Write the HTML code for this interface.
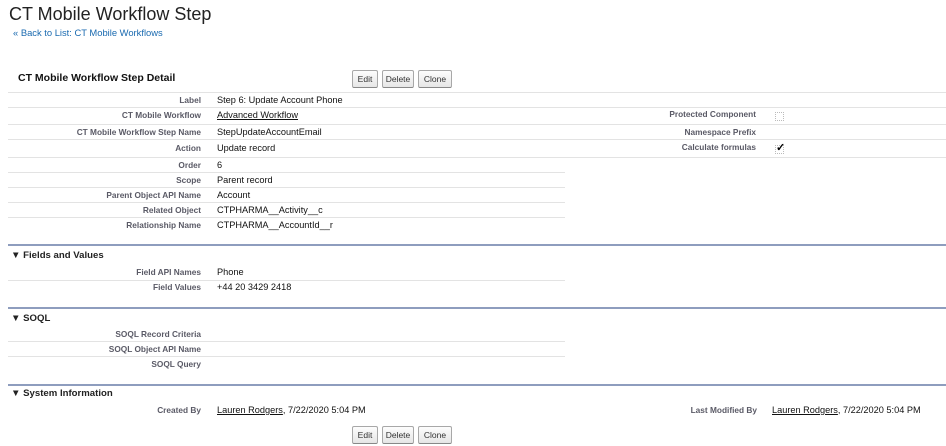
<!DOCTYPE html>
<html><head><meta charset="utf-8"><style>
*{margin:0;padding:0;box-sizing:border-box}
body{width:946px;height:446px;background:#fff;position:relative;overflow:hidden;font-family:"Liberation Sans",Arial,sans-serif;color:#000}
.a{position:absolute;white-space:nowrap}
.t{left:9px;top:4px;font-size:18px;color:#222}
.bk{left:13px;top:27px;font-size:9.4px;color:#1a6ab0}
.dh{left:18px;top:72px;font-size:10.5px;font-weight:bold;color:#111}
.btn{position:absolute;height:18px;border:1px solid #a8a8a8;border-bottom-color:#888;border-radius:2px;background:linear-gradient(#fdfdfd,#e6e6e6);font-size:8.5px;color:#333;text-align:center;line-height:16px}
.l{font-size:8.3px;font-weight:bold;color:#5a5a66;text-align:right}
.v{font-size:9.2px;color:#111}
.ln{position:absolute;height:1px;background:#e3e3e3}
.bl{position:absolute;left:8px;width:938px;height:2px;background:#8e9dbe}
.sh{font-size:9.6px;font-weight:bold;color:#222;left:11px}
u{text-decoration:underline}
.cb{position:absolute;width:9px;height:9px;border:1px dotted #bbb}
</style></head><body>
<div class="a t">CT Mobile Workflow Step</div>
<div class="a bk">« Back to List: CT Mobile Workflows</div>
<div class="a dh">CT Mobile Workflow Step Detail</div>
<div class="btn" style="left:352px;top:70px;width:26px">Edit</div>
<div class="btn" style="left:382px;top:70px;width:32px">Delete</div>
<div class="btn" style="left:418px;top:70px;width:34px">Clone</div>

<div class="ln" style="left:8px;top:92px;width:938px"></div>
<div class="ln" style="left:8px;top:107px;width:938px"></div>
<div class="ln" style="left:8px;top:124px;width:938px"></div>
<div class="ln" style="left:8px;top:139px;width:938px"></div>
<div class="ln" style="left:8px;top:157px;width:938px"></div>
<div class="ln" style="left:8px;top:172px;width:557px"></div>
<div class="ln" style="left:8px;top:187px;width:557px"></div>
<div class="ln" style="left:8px;top:202px;width:557px"></div>
<div class="ln" style="left:8px;top:217px;width:557px"></div>

<div class="a l" style="right:745px;top:95px">Label</div><div class="a v" style="left:217px;top:95px">Step 6: Update Account Phone</div>
<div class="a l" style="right:745px;top:110px">CT Mobile Workflow</div><div class="a v" style="left:217px;top:110px"><u>Advanced Workflow</u></div>
<div class="a l" style="right:745px;top:127px">CT Mobile Workflow Step Name</div><div class="a v" style="left:217px;top:127px">StepUpdateAccountEmail</div>
<div class="a l" style="right:745px;top:143px">Action</div><div class="a v" style="left:217px;top:143px">Update record</div>
<div class="a l" style="right:745px;top:160px">Order</div><div class="a v" style="left:217px;top:160px">6</div>
<div class="a l" style="right:745px;top:175px">Scope</div><div class="a v" style="left:217px;top:175px">Parent record</div>
<div class="a l" style="right:745px;top:190px">Parent Object API Name</div><div class="a v" style="left:217px;top:190px">Account</div>
<div class="a l" style="right:745px;top:205px">Related Object</div><div class="a v" style="left:217px;top:205px">CTPHARMA__Activity__c</div>
<div class="a l" style="right:745px;top:220px">Relationship Name</div><div class="a v" style="left:217px;top:220px">CTPHARMA__AccountId__r</div>

<div class="a l" style="right:190px;top:109px">Protected Component</div><div class="cb" style="left:775px;top:112px"></div>
<div class="a l" style="right:190px;top:127px">Namespace Prefix</div>
<div class="a l" style="right:190px;top:142px">Calculate formulas</div><div class="cb" style="left:775px;top:145px"></div><div class="a" style="left:776px;top:141px;font-size:11px;font-weight:bold">✓</div>

<div class="bl" style="top:244px"></div>
<div class="a sh" style="top:250px">▼ Fields and Values</div>
<div class="a l" style="right:745px;top:267px">Field API Names</div><div class="a v" style="left:217px;top:267px">Phone</div>
<div class="ln" style="left:8px;top:280px;width:557px"></div>
<div class="a l" style="right:745px;top:282px">Field Values</div><div class="a v" style="left:217px;top:282px">+44 20 3429 2418</div>

<div class="bl" style="top:307px"></div>
<div class="a sh" style="top:313px">▼ SOQL</div>
<div class="a l" style="right:745px;top:329px">SOQL Record Criteria</div>
<div class="ln" style="left:8px;top:341px;width:557px"></div>
<div class="a l" style="right:745px;top:344px">SOQL Object API Name</div>
<div class="ln" style="left:8px;top:356px;width:557px"></div>
<div class="a l" style="right:745px;top:359px">SOQL Query</div>

<div class="bl" style="top:384px"></div>
<div class="a sh" style="top:388px">▼ System Information</div>
<div class="a l" style="right:745px;top:405px">Created By</div><div class="a v" style="left:217px;top:405px"><u>Lauren Rodgers</u>, 7/22/2020 5:04 PM</div>
<div class="a l" style="right:189px;top:405px">Last Modified By</div><div class="a v" style="left:772px;top:405px"><u>Lauren Rodgers</u>, 7/22/2020 5:04 PM</div>

<div class="btn" style="left:352px;top:426px;width:26px">Edit</div>
<div class="btn" style="left:382px;top:426px;width:32px">Delete</div>
<div class="btn" style="left:418px;top:426px;width:34px">Clone</div>
</body></html>
